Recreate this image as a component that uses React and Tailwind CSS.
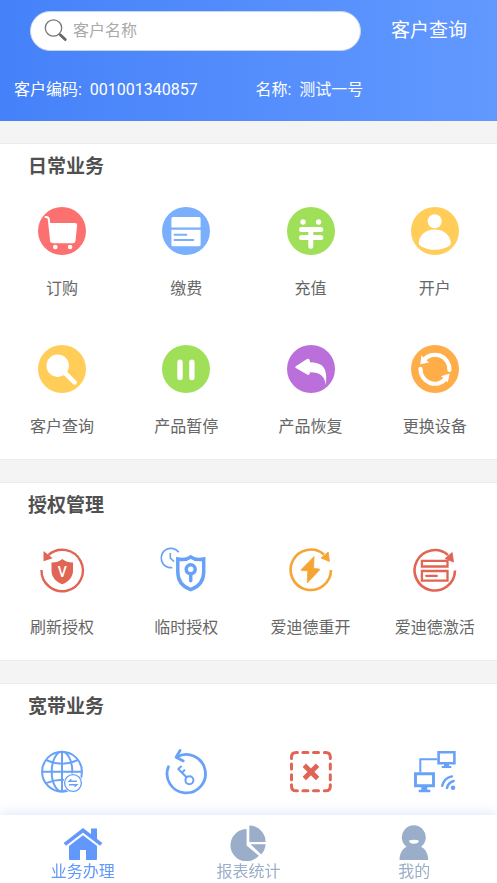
const CartIcon = () => (
  <>
    <circle cx="24" cy="24" r="24" fill="#fc7170" />
    <path d="M7.6 10q2.8-.4 3.2 2.4l2.4 22" fill="none" stroke="#fff" strokeWidth="2" strokeLinecap="round" />
    <path d="M11.4 16H37q2.3 0 2.1 2.3l-1.6 15.4q-.3 2.5-2.7 2.5H15q-2 0-2.3-2.2z" fill="#fff" />
    <circle cx="17.3" cy="40" r="2.3" fill="#fff" />
    <circle cx="32.1" cy="40" r="2.3" fill="#fff" />
  </>
)

const BillIcon = () => (
  <>
    <circle cx="24" cy="24" r="24" fill="#79affc" />
    <path d="M11 10h26q1.6 0 1.6 1.6v9H9.4v-9Q9.4 10 11 10zM9.4 22.8h29.2v14.9q0 1.6-1.6 1.6H11q-1.6 0-1.6-1.6z" fill="#fff" />
    <path d="M12.5 27.8h11.8M12.5 33.1h18.8" stroke="#79affc" strokeWidth="2" strokeLinecap="round" />
  </>
)

const RechargeIcon = () => (
  <>
    <circle cx="24" cy="24" r="24" fill="#a0df58" />
    <circle cx="16" cy="15" r="2.7" fill="#fff" />
    <circle cx="31.6" cy="15" r="2.7" fill="#fff" />
    <path d="M14.5 22.4h19.3M14.5 30.4h19.3M23.8 25v14.3" stroke="#fff" strokeWidth="5" strokeLinecap="round" />
  </>
)

const AccountIcon = () => (
  <>
    <circle cx="24" cy="24" r="24" fill="#ffcd58" />
    <circle cx="23.7" cy="14.3" r="7" fill="#fff" />
    <path d="M7.8 36.6C7.4 28.5 15 22.4 23.8 22.4s16.4 6.1 16 14.2c-.1 1.6-1.3 2.2-3 3.1-7.4 4.1-18.6 4.1-26 0-1.7-.9-2.9-1.5-3-3.1z" fill="#fff" />
  </>
)

const QueryIcon = () => (
  <>
    <circle cx="24" cy="24" r="24" fill="#ffcd58" />
    <circle cx="19.7" cy="20.7" r="11.2" fill="#fff" />
    <path d="M26 27l10.6 10.3" stroke="#fff" strokeWidth="4.6" strokeLinecap="round" />
  </>
)

const PauseIcon = () => (
  <>
    <circle cx="24" cy="24" r="24" fill="#a0df58" />
    <path d="M18 17.2v15.4M29.9 17.2v15.4" stroke="#fff" strokeWidth="5.4" strokeLinecap="round" />
  </>
)

const RestoreIcon = () => (
  <>
    <circle cx="24" cy="24" r="24" fill="#bb6fda" />
    <path d="M8.8 21.2L20 14.1q2.3-1.1 2.7 1.2l.3 2C34 17.8 38.6 21 39.2 31.5l-.2 9C37.7 31 33.5 27.6 23 27.3l-.4 1.5q-.6 1.7-2.5.8L8.8 23.1q-1.1-.9 0-1.9z" fill="#fff" />
  </>
)

const SwapIcon = () => (
  <>
    <circle cx="24" cy="24" r="24" fill="#ffad49" />
    <path d="M12.5 15.5A14.4 14.4 0 0 1 38.4 24.8M9.5 23.8A14.4 14.4 0 0 0 35.4 33" fill="none" stroke="#fff" strokeWidth="4.2" strokeLinecap="round" />
    <path d="M10.4 10.2L9.3 19.2l8.6-1.6zM38.6 28.4L30 31.2l6.8 6z" fill="#fff" />
  </>
)

const RefreshAuthIcon = () => (
  <>
    <path d="M3.5 24A20.7 20.7 0 1 0 10.5 9" fill="none" stroke="#e06554" strokeWidth="2.4" />
    <path d="M5.5 5v10.3l9.2-3z" fill="#e06554" />
    <path d="M24.3 13c3 2.6 6.6 3.5 10.7 3.4v8.2c0 6.6-4.2 11.2-10.7 13.7-6.5-2.5-10.8-7.1-10.8-13.7v-8.2c4.1.1 7.8-.8 10.8-3.4z" fill="#e06554" />
    <text x="24.3" y="31" textAnchor="middle" fontSize="14" fontWeight="500" fill="#fff">V</text>
  </>
)

const TempAuthIcon = () => (
  <g fill="none" stroke="#68a2f8">
    <path d="M16.8 6.3A9.7 9.7 0 1 0 10.3 21.6" strokeWidth="1.7" />
    <path d="M8.3 7v5l3.7 3.6" strokeWidth="1.6" />
    <path d="M28.7 11c-3.7 2.6-8.4 3-12.9 2v13c0 9 5.2 14.9 12.9 17.6C36.4 40.9 41.7 35 41.7 26V13c-4.5 1-9.3.6-13-2z" strokeWidth="3.5" />
    <circle cx="28.7" cy="23.3" r="4.5" strokeWidth="3.5" />
    <path d="M28.7 28v6.7" strokeWidth="3.5" strokeLinecap="round" />
  </g>
)

const RestartIcon = () => (
  <>
    <path d="M44 24A20.2 20.2 0 1 1 37 8.5" fill="none" stroke="#f6a433" strokeWidth="2.6" />
    <path d="M41.2 6l1.3 9.5-8.5-3.4z" fill="#f6a433" stroke="#f6a433" strokeWidth=".8" strokeLinejoin="round" />
    <path d="M27 10.5L14.3 23.5q-.4.9.5 1l6 .3L20.2 37 32.5 24q.5-.9-.5-1.1l-5.4-.4z" fill="#f6a433" stroke="#f6a433" strokeWidth=".8" strokeLinejoin="round" />
  </>
)

const ActivateIcon = () => (
  <>
    <g fill="none" stroke="#e06554">
      <path d="M44 24.5A20.2 20.2 0 1 1 37 9" strokeWidth="2.6" />
      <path d="M10.9 14.9h25.6v5.6H10.9zM10.9 25h25.6v9.7H10.9z" strokeWidth="2.3" />
      <path d="M15.2 29.9h10.6" strokeWidth="2.2" strokeLinecap="round" />
    </g>
    <path d="M41.2 6.5l1.3 9.5-8.5-3.4z" fill="#e06554" stroke="#e06554" strokeWidth=".8" strokeLinejoin="round" />
  </>
)

const GlobeIcon = () => (
  <>
    <g fill="none" stroke="#68a2f8" strokeWidth="2">
      <circle cx="24" cy="24.7" r="19.9" />
      <ellipse cx="24" cy="24.7" rx="10.3" ry="19.9" />
      <path d="M24 4.8v39.8M4 24.7h40M8.2 13.2q15.800 7 31.600 0M8.200 36.200q15.800-7 31.600 0" />
    </g>
    <circle cx="35" cy="36" r="9.8" fill="#fff" />
    <g fill="none" stroke="#68a2f8" strokeWidth="1.4">
      <circle cx="35" cy="36" r="8.4" />
      <path d="M39 34.2h-7.800l2.200-2M31 37.800h7.800l-2.200 2" />
    </g>
  </>
)

const KeyResetIcon = () => (
  <g fill="none" stroke="#68a2f8" strokeLinecap="round" strokeLinejoin="round">
    <path d="M6.4 19.7A19.2 19.2 0 1 0 15 9.9" strokeWidth="2.8" />
    <path d="M18.1 3.5l-4 6.7 7.2 3.7" strokeWidth="2.8" />
    <circle cx="27.4" cy="33.3" r="4" strokeWidth="2" />
    <path d="M24.5 30.2l-8.2-8.2 2.7-2.5M20 25.6l2.4-2.4" strokeWidth="2" />
  </g>
)

const RemoveIcon = () => (
  <g fill="none" stroke="#e06554" strokeLinecap="round">
    <path
      d="M4.500 11.600v-1.500q0-4.600 4.600-4.600h1.300M37.400 5.500h1.300q4.600 0 4.600 4.600v1.500M43.300 37.700v1.500q0 4.600-4.600 4.600h-1.300M10.400 43.800H9.100q-4.600 0-4.600-4.600v-1.500M15.900 5.500h5M26.500 5.500h5M15.900 43.800h5M26.500 43.800h5M4.500 16.900v5M4.500 27.700v5M43.300 16.900v5M43.300 27.700v5"
      strokeWidth="3"
    />
    <path d="M17.300 18.300l13.300 13.200M30.600 18.300L17.300 31.500" strokeWidth="4.800" strokeLinecap="butt" />
  </g>
)

const NetworkIcon = () => (
  <>
    <g fill="none" stroke="#68a2f8">
      <path d="M27.6 5.3h15.8v11H27.6z" strokeWidth="2.6" />
      <path d="M4.5 26.8h18v12h-18z" strokeWidth="2.9" />
      <path d="M26.3 12.3h-17v13" strokeWidth="2" />
      <path d="M31.2 38.8q2-7.8 9.7-9.4M36 41q1-5.2 6.600-7" strokeWidth="2.5" strokeLinecap="round" />
    </g>
    <path d="M33 17h5v2h2.3v2h-9.600v-2H33zM10.300 40h6v2.800h3v2.500H7.700v-2.500h2.600z" fill="#68a2f8" />
    <circle cx="42" cy="40.7" r="2.3" fill="#68a2f8" />
  </>
)

const HomeIcon = () => (
  <>
    <path d="M28 3.4h6V16l-6-4.5z" />
    <path d="M1.8 19.4L20 5.400l18.200 14" fill="none" stroke="currentColor" strokeWidth="3.7" />
    <path d="M6 21L20 10.200 34 21v13q0 1-1 1H23V25h-6v10H7q-1 0-1-1z" />
  </>
)

const ReportIcon = () => (
  <>
    <path d="M21.3.6A16.4 16.4 0 0 1 37.6 17H21.300z" />
    <path d="M22.600 19.300h15q-.4 6-4.400 10.200z" />
    <path d="M18.600 4v16.400l12.300 10.400A16.200 16.200 0 1 1 18.600 4z" />
  </>
)

const MineIcon = () => (
  <>
    <path d="M12.5 21.8a12 12 0 1 1 14.6 0C31.5 24 34 28.5 34.2 35H5.5c.2-6.5 2.7-11 7-13.2z" />
    <path d="M15 15.4q4.8-1.2 9.8 0-.3 3.3-4.9 3.3T15 15.4z" fill="#fff" />
  </>
)

const sections = [
  {
    title: '日常业务',
    items: [
      { label: '订购', icon: CartIcon },
      { label: '缴费', icon: BillIcon },
      { label: '充值', icon: RechargeIcon },
      { label: '开户', icon: AccountIcon },
      { label: '客户查询', icon: QueryIcon },
      { label: '产品暂停', icon: PauseIcon },
      { label: '产品恢复', icon: RestoreIcon },
      { label: '更换设备', icon: SwapIcon },
    ],
  },
  {
    title: '授权管理',
    items: [
      { label: '刷新授权', icon: RefreshAuthIcon },
      { label: '临时授权', icon: TempAuthIcon },
      { label: '爱迪德重开', icon: RestartIcon },
      { label: '爱迪德激活', icon: ActivateIcon },
    ],
  },
  {
    title: '宽带业务',
    items: [
      { icon: GlobeIcon },
      { icon: KeyResetIcon },
      { icon: RemoveIcon },
      { icon: NetworkIcon },
    ],
  },
]

const tabs = [
  { label: '业务办理', icon: HomeIcon, active: true },
  { label: '报表统计', icon: ReportIcon },
  { label: '我的', icon: MineIcon },
]

function Header() {
  return (
    <header className="bg-linear-to-r from-[#4581f9] to-[#6299ff] pt-[11px] pb-[19px] text-white">
      <div className="flex items-center gap-[30px] px-[30px]">
        <label className="flex h-10 min-w-0 flex-1 items-center gap-[5px] rounded-full border border-[#c9d5e6] bg-white pr-4 pl-[13px]">
          <svg viewBox="0 0 24 24" className="h-6 w-6 shrink-0" fill="none">
            <circle cx="9.5" cy="9" r="8.2" stroke="#777" strokeWidth="1.3" />
            <path d="M15.3 15l1.5 1.5" stroke="#666" strokeWidth="1.5" />
            <path d="M16.5 16l4.7 4.5" stroke="#666" strokeWidth="2.9" strokeLinecap="round" />
          </svg>
          <input
            type="text"
            aria-label="客户名称"
            placeholder="客户名称"
            className="w-full min-w-0 bg-transparent text-base text-[#555] outline-none placeholder:text-[#aaa]"
          />
        </label>
        <button type="button" className="shrink-0 text-[19px] leading-9">客户查询</button>
      </div>
      <div className="mt-[27px] grid grid-cols-2 gap-[14px] px-[14px] text-base leading-6">
        <p>客户编码:&nbsp; 001001340857</p>
        <p>名称:&nbsp; 测试一号</p>
      </div>
    </header>
  )
}

function Section({ title, items }) {
  return (
    <section className="border-t-[22px] border-[#f4f4f4]">
      <div className="border-y border-[#ececec] bg-white pt-[9px] pb-5">
        <h2 className="px-7 text-[19px] leading-7 font-bold text-[#505050]">{title}</h2>
        <div className="mt-[26px] grid grid-cols-4 gap-y-11">
          {items.map(({ label, icon: Icon }, i) => (
            <button key={i} type="button" className="flex flex-col items-center gap-[22px]">
              <svg viewBox="0 0 48 48" className="h-12 w-12 overflow-visible">
                <Icon />
              </svg>
              {label && <span className="text-base leading-6 text-[#666]">{label}</span>}
            </button>
          ))}
        </div>
      </div>
    </section>
  )
}

function TabBar() {
  return (
    <nav className="z-10 grid shrink-0 grid-cols-3 bg-white pt-[10px] pb-px shadow-[0_-2px_12px_#dfe8f8]">
      {tabs.map(({ label, icon: Icon, active }) => (
        <a
          key={label}
          href="#"
          className={`flex flex-col items-center gap-px text-base leading-5 ${active ? 'text-[#6297fc]' : 'text-[#9aaeca]'}`}
        >
          <svg viewBox="0 0 40 36" className="h-9 w-10" fill="currentColor">
            <Icon />
          </svg>
          {label}
        </a>
      ))}
    </nav>
  )
}

export default function App() {
  return (
    <div className="flex h-dvh flex-col bg-[#f4f4f4] font-[Roboto,'Noto_Sans_CJK_SC',sans-serif]">
      <main className="min-h-0 flex-1 overflow-y-auto [scrollbar-width:none]">
        <Header />
        {sections.map((section) => (
          <Section key={section.title} {...section} />
        ))}
      </main>
      <TabBar />
    </div>
  )
}
